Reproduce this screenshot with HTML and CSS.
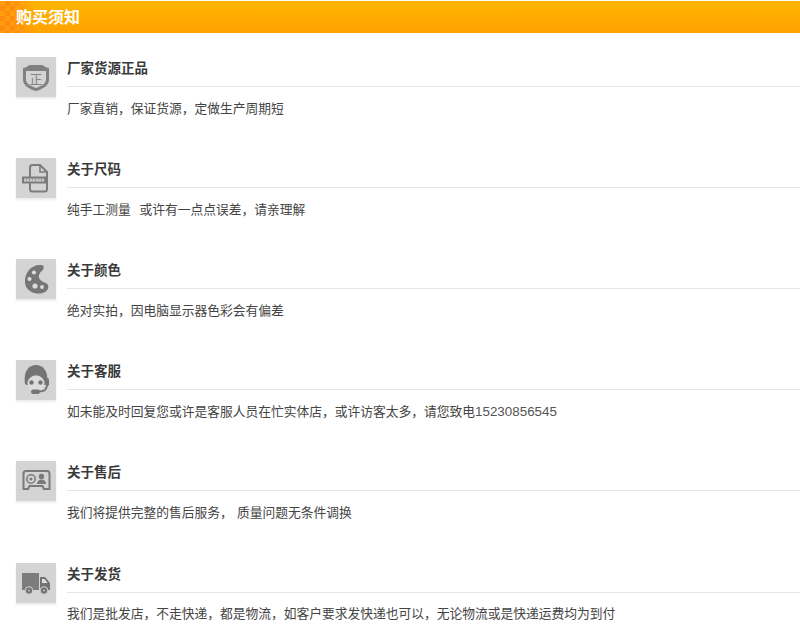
FILE: index.html
```html
<!DOCTYPE html>
<html lang="zh">
<head>
<meta charset="utf-8">
<title>购买须知</title>
<link rel="stylesheet" href="styles.css">
</head>
<body>
<header class="banner">
  <div class="checker"></div>
  <h1>购买须知</h1>
</header>
<main class="list">
  <section class="row">
    <div class="icon"><svg viewBox="0 0 40 40"><path d="M7 11c4 0 5-3 7-3h12c2 0 3 3 7 3v12c0 5-6 9-13 11-7-2-13-6-13-11z" fill="#808080"/><path d="M10 14h20v9c0 3-4 6-10 8-6-2-10-5-10-8z" fill="#d4d4d4"/><text x="20" y="27" class="badge">正</text></svg></div>
    <div class="body"><h2>厂家货源正品</h2><p>厂家直销&#xFF0C;保证货源&#xFF0C;定做生产周期短</p></div>
  </section>
  <section class="row">
    <div class="icon"><svg viewBox="0 0 40 40"><path d="M14 19V9.500Q14 7 16.500 7H24l7 7v17q0 2.500-2.500 2.500h-12Q14 33.500 14 31v-6" fill="none" stroke="#7c7c7c" stroke-width="2"/><path d="M24 7v7h7" fill="none" stroke="#7c7c7c" stroke-width="1.600"/><path d="M6 18.500h24v7H6z" fill="#7c7c7c"/><path d="M8 20.500h20v3H8z" fill="#c8c8c8"/><path d="M10.500 20.500v1.500M13.500 20.500v2M16.500 20.500v1.500M19.500 20.500v2M22.500 20.500v1.500M25.500 20.500v2" stroke="#777" stroke-width=".8"/></svg></div>
    <div class="body"><h2>关于尺码</h2><p>纯手工测量&nbsp; 或许有一点点误差&#xFF0C;请亲理解</p></div>
  </section>
  <section class="row">
    <div class="icon"><svg viewBox="0 0 40 40"><path d="M27 6.500C17 4 8 13 9 24c.8 8 9 11 15 10.500 6-.4 9.500-4.500 8-8.500-1-2.500-5.500-2.500-8-5.500-2.500-3-.5-7 2.500-9 1.500-1.500 1.500-4.500.5-5z" fill="#767676"/><g fill="#dcdcdc"><circle cx="18" cy="13.500" r="2.100"/><circle cx="13.500" cy="20" r="2.100"/><circle cx="19" cy="27" r="2.600"/><circle cx="26" cy="28" r="1.900"/></g></svg></div>
    <div class="body"><h2>关于颜色</h2><p>绝对实拍&#xFF0C;因电脑显示器色彩会有偏差</p></div>
  </section>
  <section class="row">
    <div class="icon"><svg viewBox="0 0 40 40"><path d="M9 24C7 11 13 5 20 5s13 6 11 19l-2 1H11z" fill="#747474"/><path d="M11.500 22c2-5 5-6.500 8.500-6.500s6.500 1.500 8.500 6.500c.3 5-3 10-8.500 10s-8.800-5-8.500-10z" fill="#dcdcdc"/><circle cx="15.500" cy="22.500" r="2.200" fill="#747474"/><circle cx="24.500" cy="22.500" r="2.200" fill="#747474"/><path d="M31 25c0 4-3 6.500-8 6.500" fill="none" stroke="#747474" stroke-width="1.800"/><rect x="15" y="29.500" width="9" height="4.500" rx="2.200" fill="#747474"/><rect x="29.500" y="18" width="3.500" height="8" rx="1.700" fill="#747474"/></svg></div>
    <div class="body"><h2>关于客服</h2><p>如未能及时回复您或许是客服人员在忙实体店&#xFF0C;或许访客太多&#xFF0C;请您致电<span class="tel">15230856545</span></p></div>
  </section>
  <section class="row">
    <div class="icon"><svg viewBox="0 0 40 40"><path d="M10 10h21q2.500 0 2.500 2.500V28H28l-1.500-3h-13L12 28H7.500V12.500Q7.500 10 10 10z" fill="none" stroke="#7a7a7a" stroke-width="2"/><circle cx="15" cy="18" r="4.200" fill="none" stroke="#7a7a7a" stroke-width="1.500"/><circle cx="15" cy="18" r="1.500" fill="#7a7a7a"/><circle cx="25.500" cy="15.500" r="2.700" fill="#7a7a7a"/><path d="M21 23c0-3 2-4.500 4.500-4.500S30 20 30 23z" fill="#7a7a7a"/></svg></div>
    <div class="body"><h2>关于售后</h2><p>我们将提供完整的售后服务&#xFF0C; 质量问题无条件调换</p></div>
  </section>
  <section class="row">
    <div class="icon"><svg viewBox="0 0 40 40"><path d="M6 10h17v17H6z" fill="#7c7c7c"/><path d="M24 14h5l5 6v7H24z" fill="#747474"/><path d="M26 16h2.500l3 4H26z" fill="#e0e0e0"/><circle cx="13" cy="27.500" r="3.800" fill="#747474" stroke="#d4d4d4"/><circle cx="28" cy="27.500" r="3.800" fill="#747474" stroke="#d4d4d4"/><circle cx="13" cy="27.500" r="1" fill="#bdbdbd"/><circle cx="28" cy="27.500" r="1" fill="#bdbdbd"/></svg></div>
    <div class="body"><h2>关于发货</h2><p>我们是批发店&#xFF0C;不走快递&#xFF0C;都是物流&#xFF0C;如客户要求发快递也可以&#xFF0C;无论物流或是快递运费均为到付</p></div>
  </section>
</main>
</body>
</html>
```

FILE: styles.css
```css
html, body {
  margin: 0;
  padding: 0;
  background: #fff;
  overflow: hidden;
}
body {
  width: 800px;
  height: 631px;
  padding-top: 1px;
  box-sizing: border-box;
  font-family: "Noto Sans CJK SC", "Liberation Sans", sans-serif;
  color: #333;
}
.banner {
  display: flex;
  align-items: center;
  height: 32px;
  padding-left: 16px;
  box-sizing: border-box;
  background: linear-gradient(#ffb500, #ffa200);
  position: relative;
}
.checker {
  position: absolute;
  left: 0;
  top: 0;
  width: 34px;
  height: 32px;
  background-color: #ff9d0a;
  background-image: conic-gradient(#ff8a12 25%, transparent 0 50%, #ff8a12 0 75%, transparent 0);
  background-size: 10px 10px;
  -webkit-mask-image: linear-gradient(90deg, #000 40%, transparent);
  mask-image: linear-gradient(90deg, #000 40%, transparent);
}
.banner h1 {
  position: relative;
  margin: 0;
  font-size: 16px;
  line-height: 30px;
  height: 32px;
  font-weight: 700;
  color: #fff;
}
.list {
  display: flex;
  flex-direction: column;
  gap: 61.120px;
  padding-top: 24px;
}
.row {
  display: flex;
  height: 40px;
  padding-left: 16px;
  gap: 11px;
}
.icon {
  flex: none;
  width: 40px;
  height: 40px;
  background: #d4d4d4;
  box-shadow: 0 2px 2px #ececec;
}
.icon svg {
  display: block;
  width: 40px;
  height: 40px;
}
.badge {
  font-family: "Noto Sans CJK SC", sans-serif;
  font-size: 13px;
  fill: #858585;
  text-anchor: middle;
}
.body {
  flex: 1;
  min-width: 0;
}
.body h2 {
  margin: 0;
  height: 29px;
  font-size: 13.500px;
  line-height: 21px;
  font-weight: 700;
  color: #3a3a3a;
  border-bottom: 1px solid #e6e6e6;
}
.body p {
  margin: 0;
  padding-top: 9.500px;
  font-size: 12.750px;
  line-height: 22px;
  white-space: nowrap;
  word-spacing: 1.500px;
  color: #444;
}
.tel {
  font-family: "Liberation Sans", sans-serif;
  font-size: 13.400px;
  color: #555;
}
```
